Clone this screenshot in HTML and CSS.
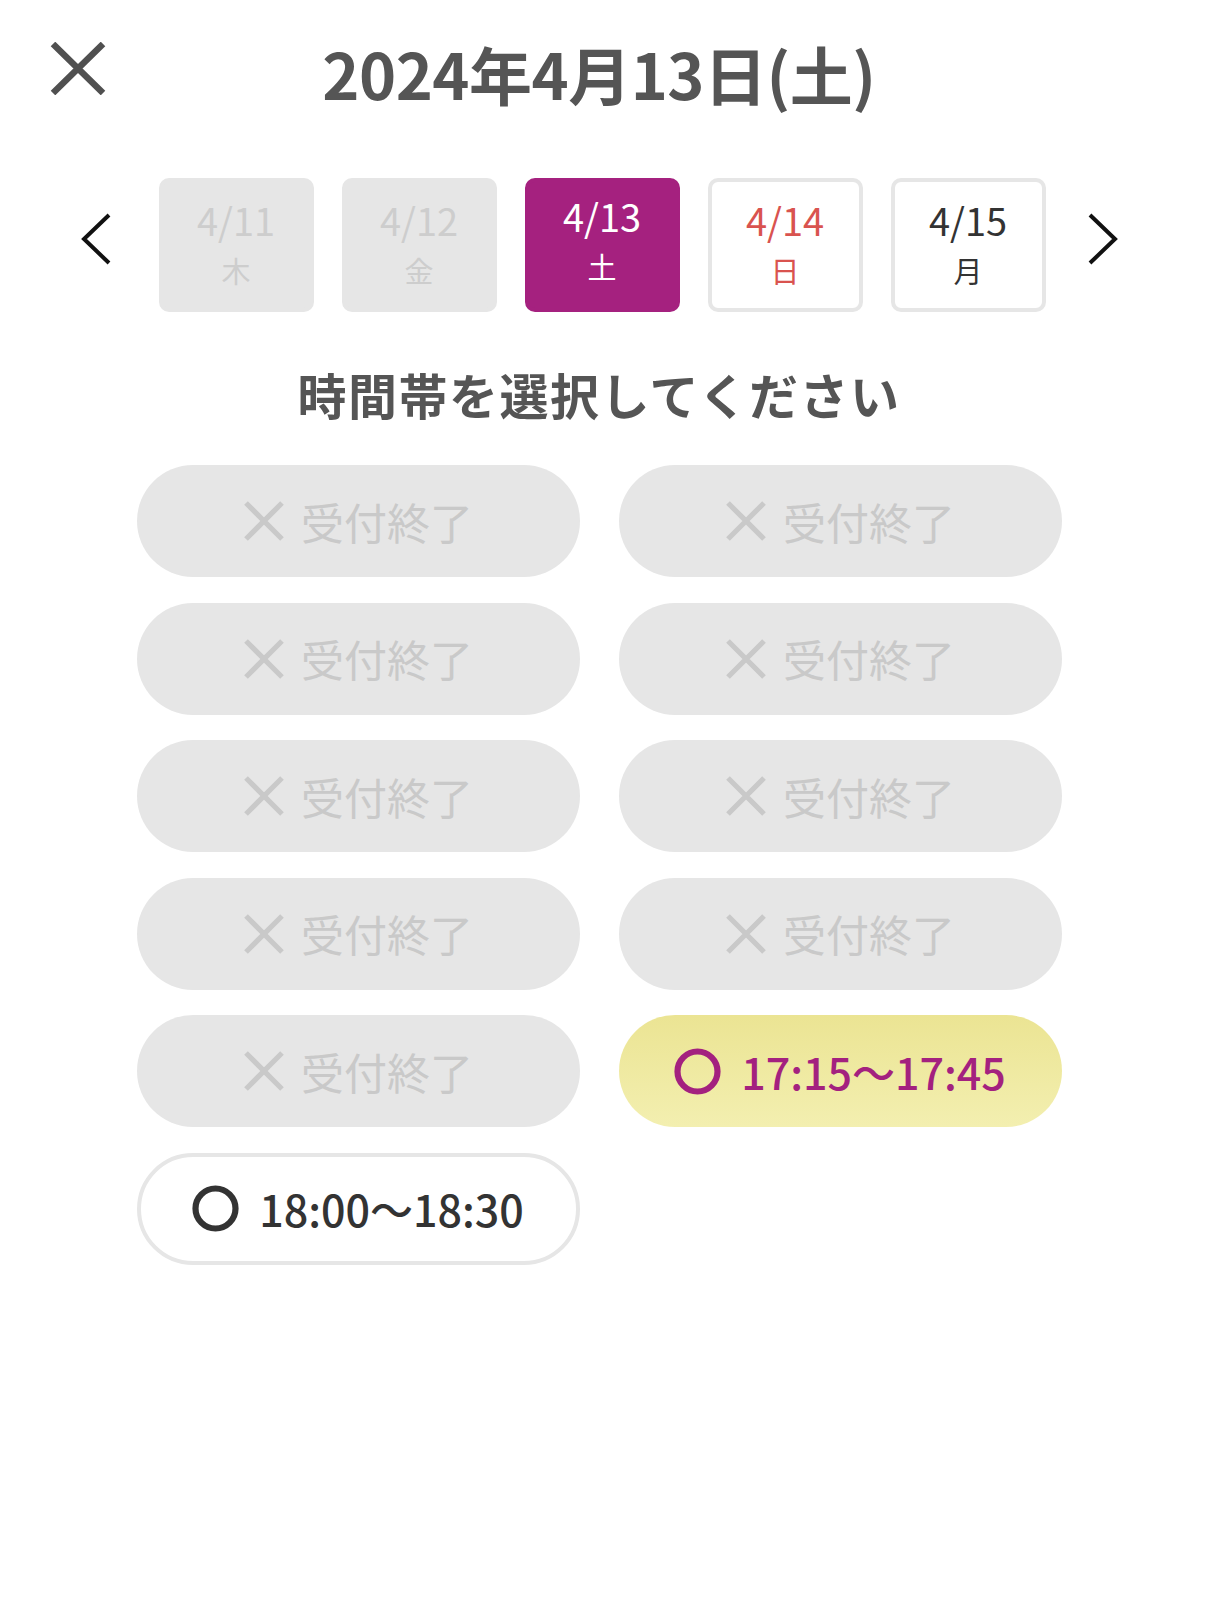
FILE: index.html
```html
<!DOCTYPE html>
<html lang="ja">
<head>
<meta charset="utf-8">
<title>時間帯選択</title>
<link rel="stylesheet" href="styles.css">
</head>
<body>
<div class="page">
  <header class="header">
    <div class="close">
      <svg width="56" height="53" viewBox="0 0 56 53"><path d="M3 2 L53 51 M53 2 L3 51" stroke="#505050" stroke-width="6.5" fill="none" stroke-linecap="butt"/></svg>
    </div>
    <h1 class="title">2024年4月13日(土)</h1>
    <div></div>
  </header>

  <nav class="dates">
    <div class="arrow arrow-left">
      <svg width="32" height="52" viewBox="0 0 32 52"><path d="M29 2 L4 26 L29 50" stroke="#111" stroke-width="4" fill="none"/></svg>
    </div>
    <div class="day day-disabled"><span class="d">4/11</span><span class="w">木</span></div>
    <div class="day day-disabled"><span class="d">4/12</span><span class="w">金</span></div>
    <div class="day day-selected"><span class="d">4/13</span><span class="w">土</span></div>
    <div class="day day-sun"><span class="d">4/14</span><span class="w">日</span></div>
    <div class="day"><span class="d">4/15</span><span class="w">月</span></div>
    <div class="arrow arrow-right">
      <svg width="32" height="52" viewBox="0 0 32 52"><path d="M3 2 L28 26 L3 50" stroke="#111" stroke-width="4" fill="none"/></svg>
    </div>
  </nav>

  <h2 class="heading">時間帯を選択してください</h2>

  <div class="slots">
    <div class="slot slot-closed"><svg class="ico" width="42" height="42" viewBox="0 0 42 42"><path d="M3 3 L39 39 M39 3 L3 39" stroke="#c9c9c9" stroke-width="5.2"/></svg><span>受付終了</span></div>
    <div class="slot slot-closed"><svg class="ico" width="42" height="42" viewBox="0 0 42 42"><path d="M3 3 L39 39 M39 3 L3 39" stroke="#c9c9c9" stroke-width="5.2"/></svg><span>受付終了</span></div>
    <div class="slot slot-closed"><svg class="ico" width="42" height="42" viewBox="0 0 42 42"><path d="M3 3 L39 39 M39 3 L3 39" stroke="#c9c9c9" stroke-width="5.2"/></svg><span>受付終了</span></div>
    <div class="slot slot-closed"><svg class="ico" width="42" height="42" viewBox="0 0 42 42"><path d="M3 3 L39 39 M39 3 L3 39" stroke="#c9c9c9" stroke-width="5.2"/></svg><span>受付終了</span></div>
    <div class="slot slot-closed"><svg class="ico" width="42" height="42" viewBox="0 0 42 42"><path d="M3 3 L39 39 M39 3 L3 39" stroke="#c9c9c9" stroke-width="5.2"/></svg><span>受付終了</span></div>
    <div class="slot slot-closed"><svg class="ico" width="42" height="42" viewBox="0 0 42 42"><path d="M3 3 L39 39 M39 3 L3 39" stroke="#c9c9c9" stroke-width="5.2"/></svg><span>受付終了</span></div>
    <div class="slot slot-closed"><svg class="ico" width="42" height="42" viewBox="0 0 42 42"><path d="M3 3 L39 39 M39 3 L3 39" stroke="#c9c9c9" stroke-width="5.2"/></svg><span>受付終了</span></div>
    <div class="slot slot-closed"><svg class="ico" width="42" height="42" viewBox="0 0 42 42"><path d="M3 3 L39 39 M39 3 L3 39" stroke="#c9c9c9" stroke-width="5.2"/></svg><span>受付終了</span></div>
    <div class="slot slot-closed"><svg class="ico" width="42" height="42" viewBox="0 0 42 42"><path d="M3 3 L39 39 M39 3 L3 39" stroke="#c9c9c9" stroke-width="5.2"/></svg><span>受付終了</span></div>
    <div class="slot slot-active"><svg class="ico" width="47" height="47" viewBox="0 0 47 47"><circle cx="23.5" cy="23.5" r="20" stroke="#a3217f" stroke-width="6.2" fill="none"/></svg><span>17:15〜17:45</span></div>
    <div class="slot slot-open"><svg class="ico" width="47" height="47" viewBox="0 0 47 47"><circle cx="23.5" cy="23.5" r="20" stroke="#333" stroke-width="6.2" fill="none"/></svg><span>18:00〜18:30</span></div>
  </div>
</div>
</body>
</html>
```

FILE: styles.css
```css
* { box-sizing: border-box; }
html, body { margin: 0; padding: 0; background: #fff; }
body {
  font-family: "Noto Sans CJK JP", "Noto Sans", sans-serif;
  color: #333;
}
.page {
  width: 1198px;
}
.header {
  display: grid;
  grid-template-columns: 1fr auto 1fr;
  align-items: center;
  align-content: start;
  padding-top: 33px;
  height: 140px;
}
.close {
  padding-left: 50px;
  display: flex;
  align-items: center;
  margin-top: -10px;
}
.close svg { display: block; }
.title {
  margin: 0;
  font-size: 63px;
  font-weight: 700;
  line-height: 80px;
  color: #555;
  letter-spacing: -0.5px;
}
.dates {
  display: flex;
  align-items: center;
  justify-content: center;
  gap: 28px;
  margin-top: 38px;
}
.arrow { width: 32px; display: flex; margin-bottom: 13px; }
.arrow svg { display: block; }
.arrow-left { margin-right: 19px; }
.arrow-right { margin-left: 13px; }
.day {
  width: 155px;
  height: 134px;
  border-radius: 10px;
  border: 4px solid #e6e6e6;
  background: #fff;
  display: flex;
  flex-direction: column;
  align-items: center;
  justify-content: center;
  gap: 8px;
  color: #333;
}
.day .d { font-size: 38px; line-height: 42px; }
.day .w { font-size: 29px; line-height: 42px; }
.day-disabled {
  background: #e6e6e6;
  border-color: #e6e6e6;
  color: #cdcdcd;
}
.day-selected {
  background: #a5217f;
  border-color: #a5217f;
  color: #fff;
  padding-bottom: 8px;
}
.day-sun { color: #d9534f; }
.heading {
  margin: 47px 0 0;
  text-align: center;
  font-size: 49px;
  line-height: 70px;
  font-weight: 700;
  color: #555;
  letter-spacing: 1.5px;
}
.slots {
  display: grid;
  grid-template-columns: 443px 443px;
  column-gap: 39px;
  row-gap: 25.5px;
  justify-content: center;
  margin-top: 36px;
}
.slot {
  height: 112px;
  border-radius: 56px;
  display: flex;
  align-items: center;
  justify-content: center;
  gap: 16px;
  font-size: 43px;
  line-height: 1;
}
.slot .ico { display: block; flex: none; }
.slot-closed {
  background: #e6e6e6;
  color: #c9c9c9;
}
.slot-active {
  background: linear-gradient(180deg, #ebe493 0%, #f3efb0 100%);
  color: #a3217f;
  font-weight: 500;
  gap: 20px;
}
.slot-open {
  background: #fff;
  border: 4px solid #e6e6e6;
  color: #333;
  font-weight: 500;
  gap: 20px;
}
```
